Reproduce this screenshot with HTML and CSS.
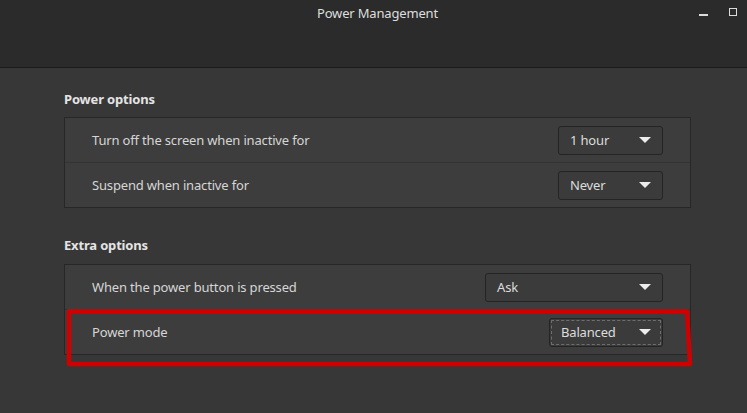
FILE: index.html
```html
<!DOCTYPE html>
<html lang="en">
<head>
    <meta charset="UTF-8">
    <title>Power Management</title>
    <link rel="stylesheet" href="styles.css">
</head>
<body>
    <div class="window">
        <div class="titlebar">
            <span class="title">Power Management</span>
            <div class="win-buttons">
                <span class="btn-min"></span>
                <span class="btn-max"></span>
            </div>
        </div>

        <div class="content">
            <h2>Power options</h2>
            <div class="frame">
                <div class="row">
                    <span class="label">Turn off the screen when inactive for</span>
                    <div class="combo w-short"><span>1 hour</span><i class="arrow"></i></div>
                </div>
                <div class="row">
                    <span class="label">Suspend when inactive for</span>
                    <div class="combo w-short"><span>Never</span><i class="arrow"></i></div>
                </div>
            </div>

            <h2>Extra options</h2>
            <div class="frame">
                <div class="row">
                    <span class="label">When the power button is pressed</span>
                    <div class="combo w-long"><span>Ask</span><i class="arrow"></i></div>
                </div>
                <div class="row">
                    <span class="label">Power mode</span>
                    <div class="combo w-mid focused"><span>Balanced</span><i class="arrow"></i></div>
                </div>
            </div>
        </div>

        <!-- marker drawn round the power mode row -->
        <svg class="marker" width="747" height="413" viewBox="0 0 747 413">
            <path d="M69 311 L687 311 L690 364 L69 364 Z" fill="none" stroke="#d00000" stroke-width="4.5" stroke-linejoin="round"/>
        </svg>
    </div>
</body>
</html>
```

FILE: styles.css
```css
* {
    box-sizing: border-box;
}
body {
    margin: 0;
    background: #373737;
    font-family: 'Noto Sans', 'DejaVu Sans', sans-serif;
    font-size: 13px;
    letter-spacing: -0.17px;
    color: #d8d8d8;
}
.window {
    position: relative;
    width: 747px;
    height: 413px;
    overflow: hidden;
}
.titlebar {
    position: relative;
    height: 68px;
    background: #2b2b2b;
    border-bottom: 1px solid #1c1c1c;
    text-align: center;
}
.title {
    display: inline-block;
    padding-top: 4px;
    padding-left: 8px;
    font-size: 13px;
    color: #dedede;
}
.win-buttons {
    position: absolute;
    top: 8px;
    right: 10px;
    display: flex;
    align-items: flex-end;
    gap: 21px;
}
.btn-min {
    width: 9px;
    height: 2px;
    background: #dcdcdc;
}
.btn-max {
    width: 8px;
    height: 8px;
    border: 1px solid #dcdcdc;
}
.content {
    padding: 24px 56px 0 64px;
}
h2 {
    margin: 0 0 11px;
    font-size: 13px;
    font-weight: bold;
    color: #e4e4e4;
    line-height: 14px;
}
.frame {
    background: #3d3d3d;
    border: 1px solid #272727;
    margin-bottom: 30px;
}
.frame + h2 {
    margin-bottom: 12px;
}
.row {
    height: 44px;
    display: flex;
    align-items: center;
    justify-content: space-between;
    padding: 0 27px;
}
.row + .row {
    border-top: 1px solid #333333;
    height: 45px;
}
.label {
    color: #d6d6d6;
}
.combo {
    height: 29px;
    display: flex;
    align-items: center;
    justify-content: space-between;
    padding: 0 11px;
    background: #3b3b3b;
    border: 1px solid #242424;
    border-radius: 3px;
    color: #dcdcdc;
}
.combo.focused {
    outline: 1px dashed #6e6e6e;
    outline-offset: -3px;
}
.w-short {
    width: 105px;
}
.w-mid {
    width: 114px;
}
.w-long {
    width: 178px;
}
.arrow {
    width: 0;
    height: 0;
    border-left: 6px solid transparent;
    border-right: 6px solid transparent;
    border-top: 6px solid #ececec;
}
.marker {
    position: absolute;
    left: 0;
    top: 0;
    pointer-events: none;
}
```
